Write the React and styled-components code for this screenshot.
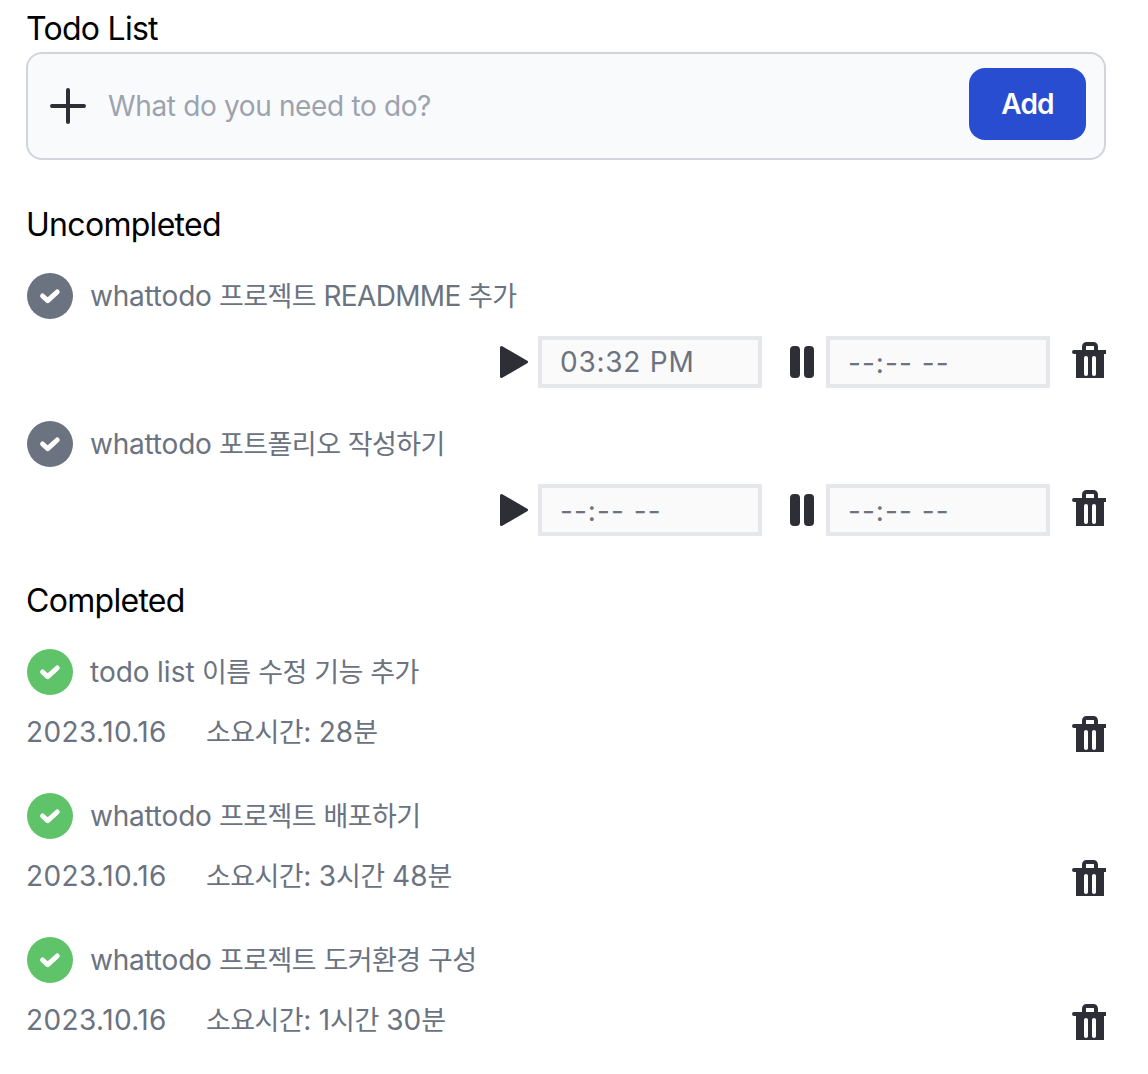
import React from "react";
import styled, { createGlobalStyle } from "styled-components";

const GlobalStyle = createGlobalStyle`
  * { box-sizing: border-box; }
  body {
    margin: 0;
    background: #fff;
    font-family: Inter, "Noto Sans CJK KR", sans-serif;
    font-size: 28px;
    font-weight: 430;
    color: #6b7280;
  }
`;

const Page = styled.main`
  padding: 4px 42px 32px 26px;
`;

const Heading = styled.h1`
  margin: 0;
  height: 48px;
  font-size: 32px;
  font-weight: 430;
  line-height: 50px;
  letter-spacing: ${(p) => p.$tracking}px;
  color: #000;
`;

const InputBar = styled.form`
  display: flex;
  align-items: center;
  height: 108px;
  margin-bottom: 40px;
  padding: 0 18px 0 22px;
  border: 2px solid #d1d5db;
  border-radius: 16px;
  background: #f9fafb;
`;

const TodoInput = styled.input`
  flex: 1;
  min-width: 0;
  margin: 0 0 0 22px;
  padding: 0;
  border: 0;
  outline: 0;
  background: transparent;
  font: inherit;
  letter-spacing: -0.35px;
  color: #6b7280;

  &::placeholder {
    color: #9ca3af;
    opacity: 1;
  }
`;

const AddButton = styled.button`
  width: 117px;
  height: 72px;
  margin-bottom: 4px;
  padding: 0;
  border: 0;
  border-radius: 16px;
  background: #294dd0;
  color: #fff;
  font: 600 28px/73px Inter, sans-serif;
  letter-spacing: -0.8px;
`;

const List = styled.ul`
  display: flex;
  flex-direction: column;
  gap: ${(p) => p.$gap}px;
  margin: 24px 0 40px;
  padding: 0;
  list-style: none;
`;

const TitleRow = styled.div`
  display: flex;
  align-items: center;
  gap: 16px;
  height: 48px;
`;

const Label = styled.span`
  display: inline-block;
  height: 40px;
  line-height: 41px;
  letter-spacing: ${(p) => p.$tracking || 0}px;
  word-spacing: -0.4px;
  white-space: pre;
`;

const Hangul = styled.span`
  font-family: "Noto Sans CJK KR", sans-serif;
  font-size: 27px;
  font-weight: 400;
  line-height: 1;
  letter-spacing: -0.55px;
`;

const Caps = styled.span`
  letter-spacing: -0.65px;
`;

const TimeRow = styled.div`
  display: flex;
  align-items: center;
  justify-content: flex-end;
  height: 52px;
  margin-top: 16px;
`;

const TimeField = styled.div`
  width: 224px;
  height: 52px;
  margin: ${(p) => p.$margin};
  padding-left: 18px;
  border: 4px solid #e5e7eb;
  background: #fafafa;
  line-height: ${(p) => (p.$empty ? 46 : 45)}px;
  letter-spacing: ${(p) => (p.$empty ? 1.05 : 0.75)}px;
  white-space: pre;
`;

const MetaRow = styled.div`
  display: flex;
  height: 40px;
  margin-top: 16px;
`;

const DateText = styled(Label)`
  width: 180px;
`;

const TrashSlot = styled.span`
  display: flex;
  margin: ${(p) => p.$margin};
`;

const Svg = styled.svg`
  display: block;
  flex: none;
`;

const INK = "#2e2e37";

const PlusIcon = () => (
  <Svg width="36" height="36" viewBox="0 0 36 36">
    <path d="M18 2v32M2 18h32" stroke={INK} strokeWidth="4" strokeLinecap="round" />
  </Svg>
);

const CheckIcon = ({ color }) => (
  <Svg width="48" height="48" viewBox="0 0 48 48">
    <circle cx="24" cy="24" r="23" fill={color} />
    <path d="M16.6 24 21.7 28.7 31.2 20" stroke="#fff" strokeWidth="5" fill="none" strokeLinecap="round" strokeLinejoin="round" />
  </Svg>
);

const PlayIcon = () => (
  <Svg width="28" height="32" viewBox="0 0 28 32">
    <path d="M1.5 1.5 26.5 16 1.5 30.5Z" fill={INK} stroke={INK} strokeWidth="3" strokeLinejoin="round" />
  </Svg>
);

const PauseIcon = () => (
  <Svg width="24" height="32" viewBox="0 0 24 32" fill={INK}>
    <rect width="10" height="32" rx="4" />
    <rect x="14" width="10" height="32" rx="4" />
  </Svg>
);

const TrashIcon = () => (
  <Svg width="34" height="36" viewBox="0 0 34 36">
    <path d="M12 10V4.5A2.5 2.5 0 0 1 14.5 2h7A2.5 2.5 0 0 1 24 4.5V10" fill="none" stroke={INK} strokeWidth="4" />
    <path d="M2 8H34V12H32V36H4V12H2A2 2 0 0 1 2 8Z" fill={INK} />
    <path d="M14 16v16M22 16v16" stroke="#fff" strokeWidth="4" strokeLinecap="round" />
  </Svg>
);

const MixedText = ({ children }) =>
  children.split(/([가-힣]+|[A-Z]+)/).map((run, i) => {
    if (i % 2 === 0) return run;
    const Run = /[A-Z]/.test(run) ? Caps : Hangul;
    return <Run key={i}>{run}</Run>;
  });

const uncompleted = [
  { title: "whattodo 프로젝트 READMME 추가", start: "03:32 PM" },
  { title: "whattodo 포트폴리오 작성하기" },
];

const completed = [
  { title: "todo list 이름 수정 기능 추가", tracking: 0, date: "2023.10.16", spent: "28분" },
  { title: "whattodo 프로젝트 배포하기", date: "2023.10.16", spent: "3시간 48분" },
  { title: "whattodo 프로젝트 도커환경 구성", date: "2023.10.16", spent: "1시간 30분" },
];

const Time = ({ value, margin }) => (
  <TimeField $empty={!value} $margin={margin}>
    {value || "--:-- --"}
  </TimeField>
);

const Title = ({ color, text, tracking = -0.2 }) => (
  <TitleRow>
    <CheckIcon color={color} />
    <Label $tracking={tracking}><MixedText>{text}</MixedText></Label>
  </TitleRow>
);

export default function App() {
  return (
    <>
      <GlobalStyle />
      <Page>
        <Heading $tracking={-0.72}>Todo List</Heading>
        <InputBar onSubmit={(e) => e.preventDefault()}>
          <PlusIcon />
          <TodoInput placeholder="What do you need to do?" />
          <AddButton>Add</AddButton>
        </InputBar>
        <Heading as="h2" $tracking={-0.7}>Uncompleted</Heading>
        <List $gap={32}>
          {uncompleted.map((item) => (
            <li key={item.title}>
              <Title color="#6b7280" text={item.title} />
              <TimeRow>
                <PlayIcon />
                <Time value={item.start} margin="0 28px 0 10px" />
                <PauseIcon />
                <Time value={item.end} margin="0 22px 0 12px" />
                <TrashSlot $margin="0 0 4px"><TrashIcon /></TrashSlot>
              </TimeRow>
            </li>
          ))}
        </List>
        <Heading as="h2" $tracking={-0.7}>Completed</Heading>
        <List $gap={40}>
          {completed.map((item) => (
            <li key={item.title}>
              <Title color="#5fc36a" text={item.title} tracking={item.tracking} />
              <MetaRow>
                <DateText $tracking={0.4}>{item.date}</DateText>
                <Label><MixedText>{`소요시간: ${item.spent}`}</MixedText></Label>
                <TrashSlot $margin="4px 0 0 auto"><TrashIcon /></TrashSlot>
              </MetaRow>
            </li>
          ))}
        </List>
      </Page>
    </>
  );
}
